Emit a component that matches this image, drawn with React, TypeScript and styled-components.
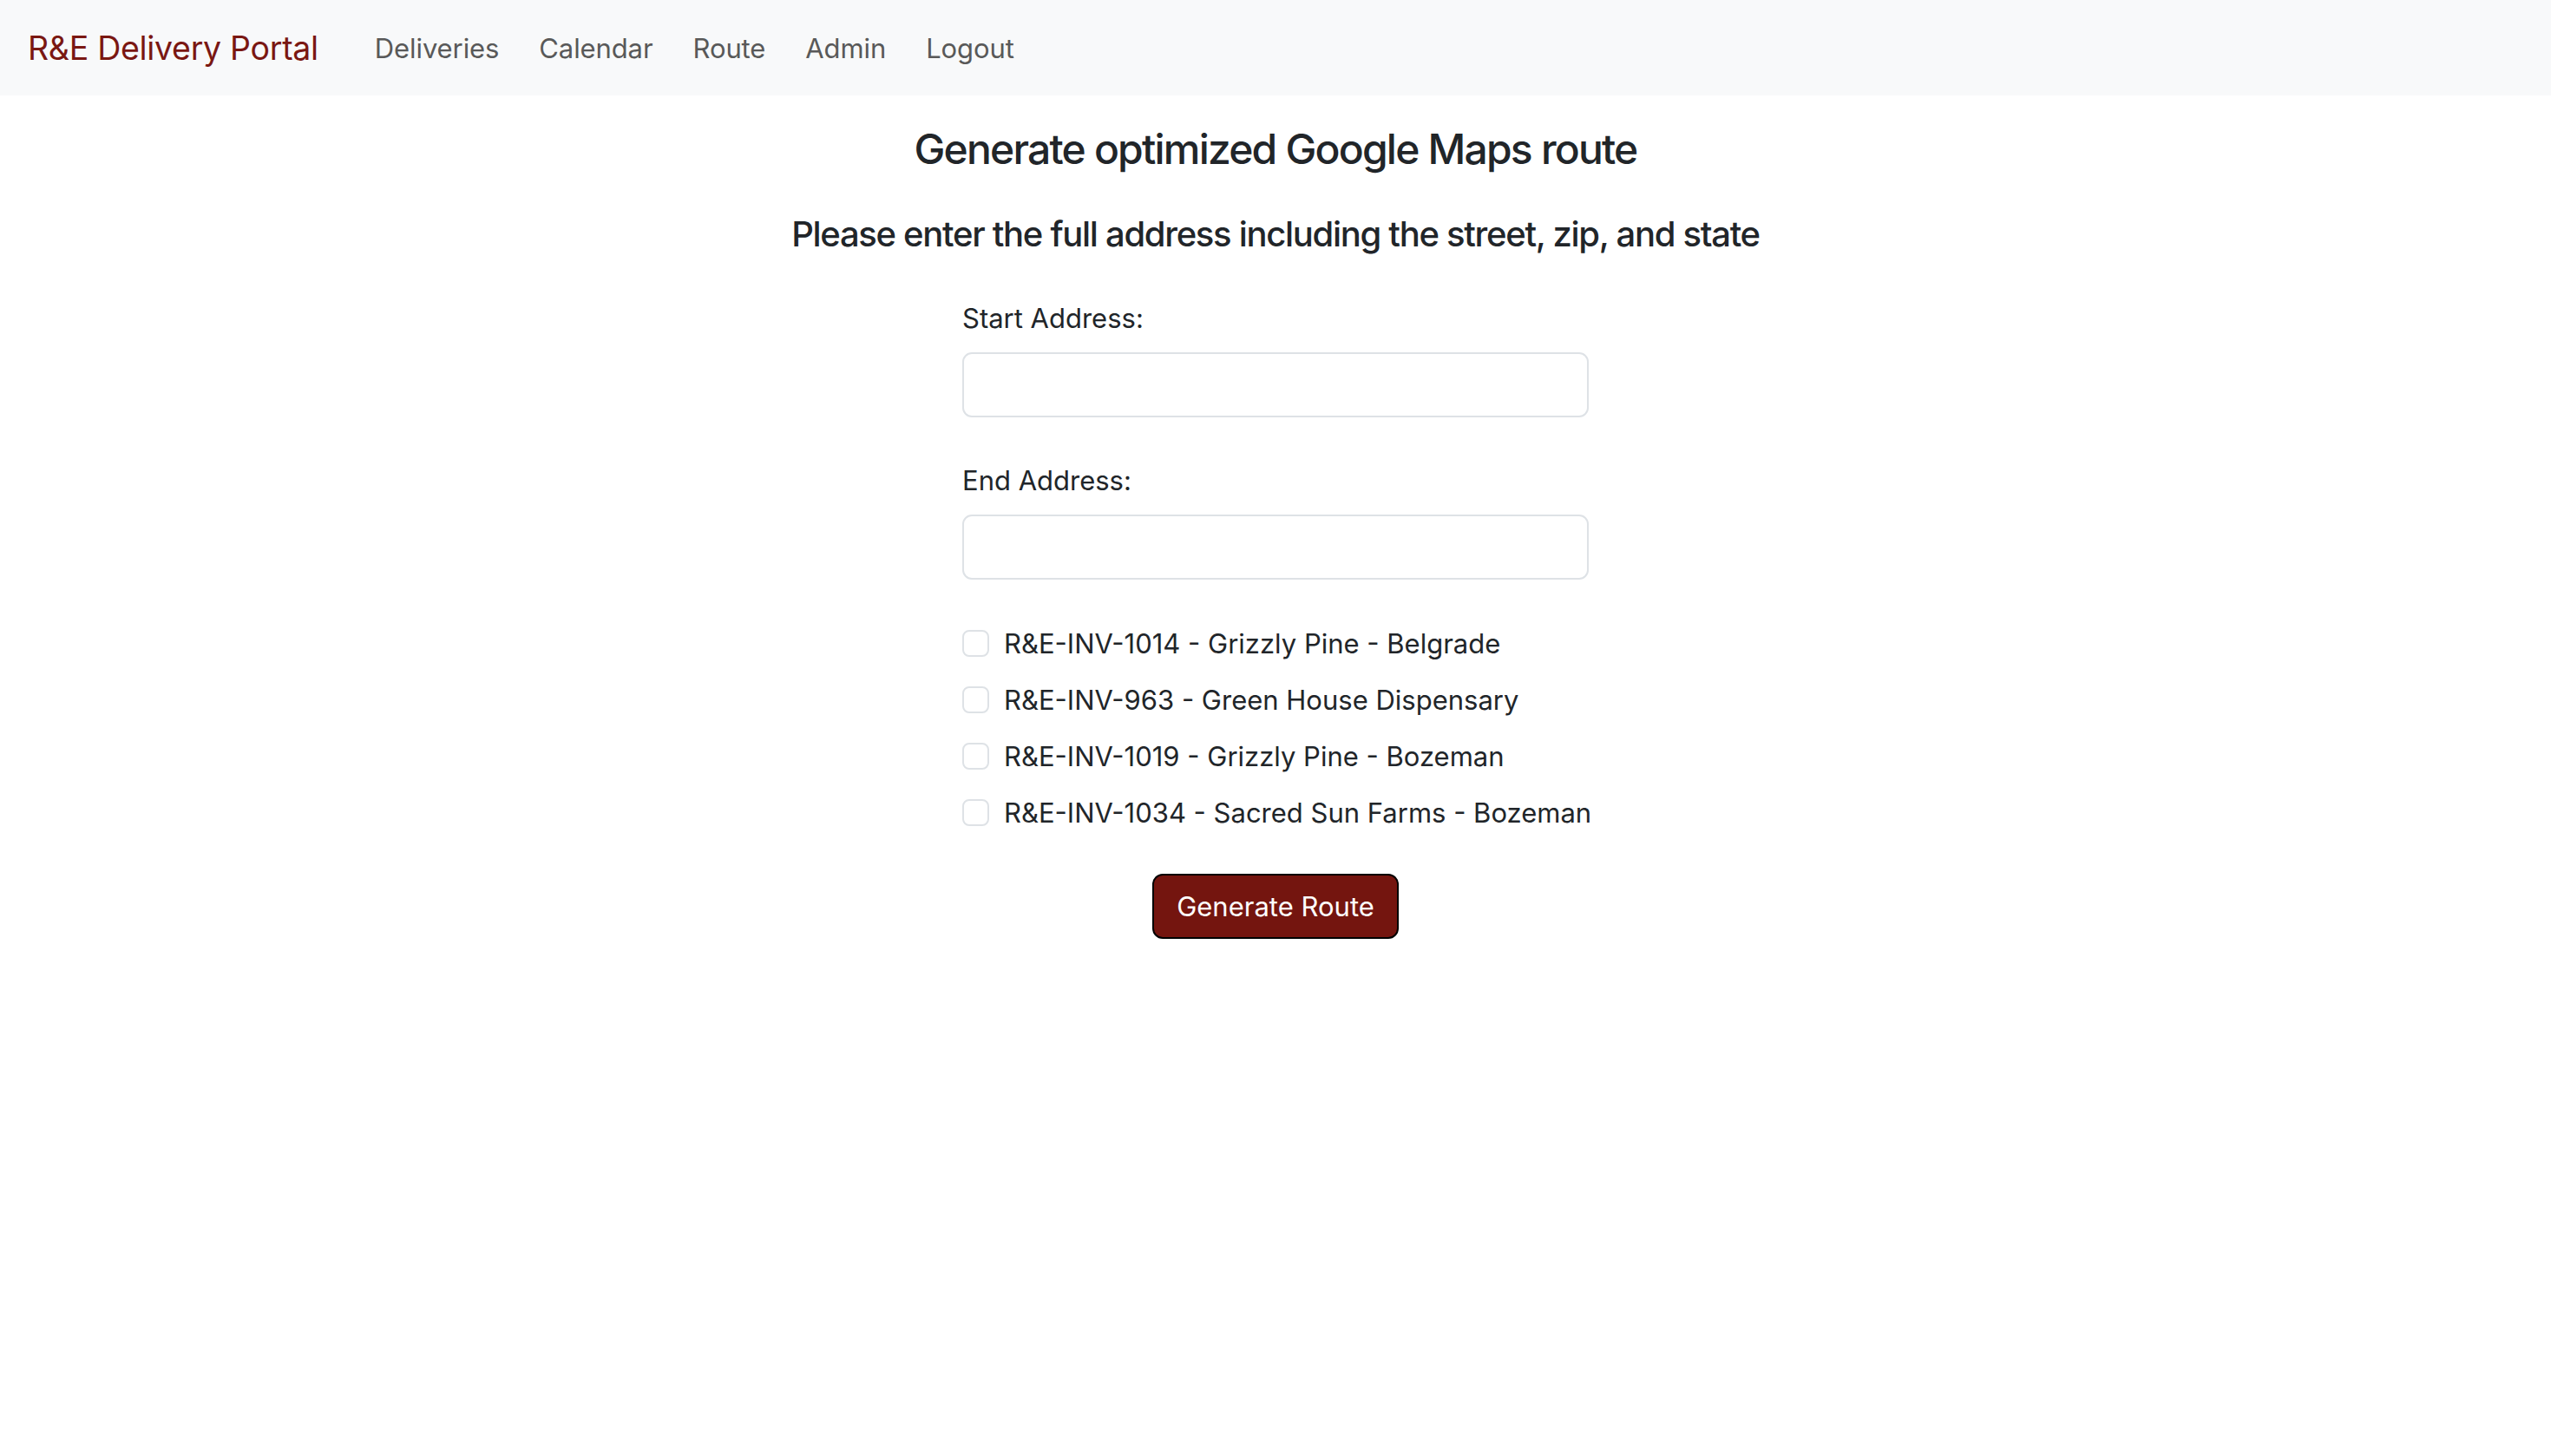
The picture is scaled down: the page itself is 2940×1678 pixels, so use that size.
import React from "react";
import styled, { createGlobalStyle } from "styled-components";

const GlobalStyle = createGlobalStyle`
  html, body {
    margin: 0;
    padding: 0;
    background: #ffffff;
  }
  body {
    font-family: Inter, "Noto Sans", "Liberation Sans", sans-serif;
    color: #212529;
  }
  * { box-sizing: border-box; }
`;

const NavBar = styled.nav`
  height: 110px;
  background: #f8f9fa;
  display: flex;
  align-items: center;
  padding: 0 32px;
`;

const Brand = styled.a`
  font-size: 37.5px;
  color: #7a1712;
  text-decoration: none;
  margin-right: 50px;
  letter-spacing: -0.3px;
`;

const NavList = styled.ul`
  display: flex;
  list-style: none;
  margin: 0;
  padding: 0;
  gap: 16px;
`;

const NavLink = styled.a`
  font-size: 31px;
  color: #595959;
  text-decoration: none;
  padding: 0 15px;
  letter-spacing: -0.1px;
`;

const Main = styled.main`
  display: flex;
  flex-direction: column;
  align-items: center;
  padding-top: 30px;
`;

const Title = styled.h3`
  margin: 0;
  font-size: 48px;
  line-height: 63px;
  font-weight: 500;
  letter-spacing: -1.8px;
`;

const Subtitle = styled.h4`
  margin: 40px 0 0;
  font-size: 40px;
  line-height: 54px;
  font-weight: 500;
  letter-spacing: -1.3px;
`;

const Form = styled.form`
  width: 722px;
  margin-top: 47px;
  display: flex;
  flex-direction: column;
`;

const Field = styled.div<{ $gap?: number }>`
  display: flex;
  flex-direction: column;
  margin-bottom: ${(p) => p.$gap ?? 50}px;
`;

const Label = styled.label`
  font-size: 31px;
  line-height: 45px;
  margin-bottom: 17px;
`;

const Input = styled.input`
  height: 75px;
  width: 100%;
  border: 2px solid #dee2e6;
  border-radius: 11px;
  padding: 0 22px;
  font-size: 30px;
  font-family: inherit;
  background: #fff;
  outline: none;
`;

const CheckList = styled.div`
  display: flex;
  flex-direction: column;
  gap: 20px;
  margin-top: 2px;
`;

const CheckRow = styled.label`
  display: flex;
  align-items: center;
  height: 45px;
  font-size: 31px;
  white-space: nowrap;
`;

const CheckBox = styled.input.attrs({ type: "checkbox" })`
  appearance: none;
  -webkit-appearance: none;
  width: 31px;
  height: 31px;
  margin: 0 17px 0 0;
  border: 2px solid #dee2e6;
  border-radius: 8px;
  background: #fff;
  flex-shrink: 0;
`;

const ButtonRow = styled.div`
  display: flex;
  justify-content: center;
  margin-top: 48px;
`;

const Button = styled.button`
  height: 75px;
  padding: 0 26px;
  background: #74150f;
  color: #ffffff;
  border: 2.5px solid #000000;
  border-radius: 12px;
  font-size: 31px;
  font-family: inherit;
  white-space: nowrap;
`;

const deliveries = [
  "R&E-INV-1014 - Grizzly Pine - Belgrade",
  "R&E-INV-963 - Green House Dispensary",
  "R&E-INV-1019 - Grizzly Pine - Bozeman",
  "R&E-INV-1034 - Sacred Sun Farms - Bozeman",
];

export default function App() {
  return (
    <>
      <GlobalStyle />
      <NavBar>
        <Brand href="#">R&amp;E Delivery Portal</Brand>
        <NavList>
          {["Deliveries", "Calendar", "Route", "Admin", "Logout"].map((l) => (
            <li key={l}>
              <NavLink href="#">{l}</NavLink>
            </li>
          ))}
        </NavList>
      </NavBar>
      <Main>
        <Title>Generate optimized Google Maps route</Title>
        <Subtitle>Please enter the full address including the street, zip, and state</Subtitle>
        <Form onSubmit={(e) => e.preventDefault()}>
          <Field>
            <Label htmlFor="start">Start Address:</Label>
            <Input id="start" type="text" />
          </Field>
          <Field $gap={49}>
            <Label htmlFor="end">End Address:</Label>
            <Input id="end" type="text" />
          </Field>
          <CheckList>
            {deliveries.map((d) => (
              <CheckRow key={d}>
                <CheckBox />
                {d}
              </CheckRow>
            ))}
          </CheckList>
          <ButtonRow>
            <Button type="submit">Generate Route</Button>
          </ButtonRow>
        </Form>
      </Main>
    </>
  );
}
